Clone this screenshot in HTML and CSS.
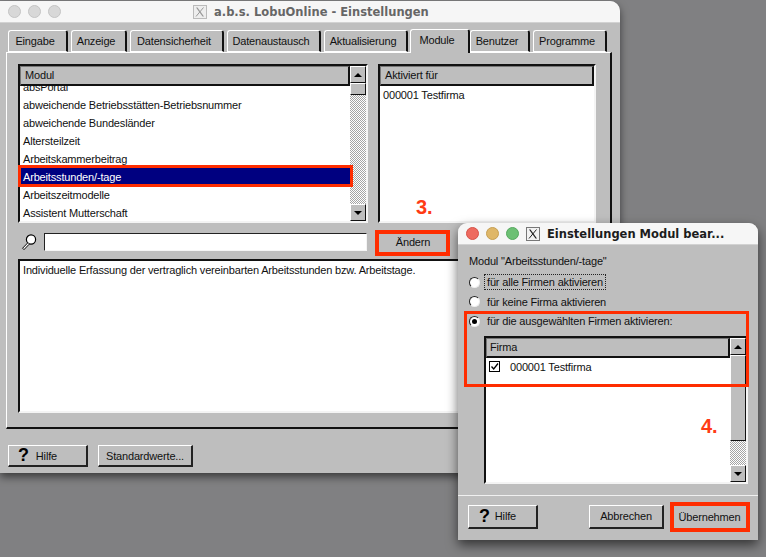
FILE: index.html
```html
<!DOCTYPE html>
<html lang="de">
<head>
<meta charset="utf-8">
<title>a.b.s. LobuOnline - Einstellungen</title>
<link rel="stylesheet" href="styles.css">
</head>
<body>
<section class="window main-window">
  <header class="titlebar">
    <div class="lights"><i class="light"></i><i class="light"></i><i class="light"></i></div>
    <div class="title title-main">
      <svg class="xicon" viewBox="0 0 14 14"><rect x="0.5" y="0.5" width="13" height="13" fill="#eee" stroke="#bbb"/><path d="M3 2.5h1.5L11 11.5H9.5z" fill="#999"/><path d="M10.5 2.5L3 11.5" stroke="#999" fill="none"/></svg>
      <span>a.b.s. LobuOnline - Einstellungen</span>
    </div>
  </header>
  <div class="main-body">
    <nav class="tabs">
      <span class="tab t1">Eingabe</span>
      <span class="tab t2">Anzeige</span>
      <span class="tab t3">Datensicherheit</span>
      <span class="tab t4">Datenaustausch</span>
      <span class="tab t5">Aktualisierung</span>
      <span class="tab t6 active">Module</span>
      <span class="tab t7">Benutzer</span>
      <span class="tab t8">Programme</span>
    </nav>
    <div class="panel">
      <div class="lists">
        <div class="listbox modules">
          <div class="list-main">
            <div class="col-head">Modul</div>
            <div class="rows">
              <div class="row first">absPortal</div>
              <div class="row">abweichende Betriebsstätten-Betriebsnummer</div>
              <div class="row">abweichende Bundesländer</div>
              <div class="row">Altersteilzeit</div>
              <div class="row">Arbeitskammerbeitrag</div>
              <div class="row selected">Arbeitsstunden/-tage</div>
              <div class="row">Arbeitszeitmodelle</div>
              <div class="row">Assistent Mutterschaft</div>
            </div>
          </div>
          <div class="scrollbar">
            <span class="sbtn"><i class="arrow up"></i></span>
            <span class="thumb small"></span>
            <span class="track"></span>
            <span class="sbtn"><i class="arrow down"></i></span>
          </div>
        </div>
        <div class="listbox active-for">
          <div class="list-main">
            <div class="col-head">Aktiviert für</div>
            <div class="rows"><div class="row plain">000001 Testfirma</div></div>
          </div>
        </div>
      </div>
      <div class="search-row">
        <svg class="lens" viewBox="0 0 16 18"><circle cx="10" cy="6.5" r="4.6" fill="#fff" stroke="#000" stroke-width="1.2"/><path d="M6.8 9.8L1.6 15.2L3 16.6L8.2 11.2" stroke="#000" stroke-width="1" fill="#fff"/></svg>
        <div class="input"></div>
        <button class="btn change">Ändern</button>
      </div>
      <div class="description">Individuelle Erfassung der vertraglich vereinbarten Arbeitsstunden bzw. Arbeitstage.</div>
    </div>
    <div class="footer main-footer">
      <button class="btn help"><b class="q">?</b><span>Hilfe</span></button>
      <button class="btn defaults">Standardwerte...</button>
    </div>
  </div>
</section>

<section class="window dialog">
  <header class="titlebar">
    <div class="lights"><i class="light red"></i><i class="light yellow"></i><i class="light green"></i></div>
    <div class="title title-dialog">
      <svg class="xicon dark" viewBox="0 0 14 14"><rect x="0.5" y="0.5" width="13" height="13" fill="#f2f2f2" stroke="#777"/><path d="M3 2.5h1.5L11 11.5H9.5z" fill="#222"/><path d="M10.5 2.5L3 11.5" stroke="#222" fill="none"/></svg>
      <span>Einstellungen Modul bear...</span>
    </div>
  </header>
  <div class="dialog-body">
    <p class="caption">Modul "Arbeitsstunden/-tage"</p>
    <div class="radio"><i class="dot"></i><span class="focus">für alle Firmen aktivieren</span></div>
    <div class="radio"><i class="dot"></i><span>für keine Firma aktivieren</span></div>
    <div class="radio"><i class="dot on"></i><span>für die ausgewählten Firmen aktivieren:</span></div>
    <div class="listbox firms">
      <div class="list-main">
        <div class="col-head">Firma</div>
        <div class="firm-row">
          <svg class="check" viewBox="0 0 11 11"><rect x="0.5" y="0.5" width="10" height="10" fill="#fff" stroke="#000"/><path d="M2.5 5.5l2.2 2.4L9 2.5" fill="none" stroke="#000" stroke-width="1.3"/></svg>
          <span>000001 Testfirma</span>
        </div>
      </div>
      <div class="scrollbar">
        <span class="sbtn"><i class="arrow up"></i></span>
        <span class="thumb large"></span>
        <span class="track"></span>
        <span class="sbtn"><i class="arrow down"></i></span>
      </div>
    </div>
  </div>
  <div class="footer dialog-footer">
    <button class="btn help-d"><b class="q">?</b><span>Hilfe</span></button>
    <button class="btn cancel">Abbrechen</button>
    <button class="btn apply">Übernehmen</button>
  </div>
</section>

<div class="mark m-row"></div>
<div class="mark m-change"></div>
<div class="mark m-firms"></div>
<div class="mark m-apply"></div>
<div class="step s3">3.</div>
<div class="step s4">4.</div>
</body>
</html>
```

FILE: styles.css
```css
* { box-sizing: border-box; }
html, body { margin: 0; padding: 0; }
body {
  width: 766px; height: 557px; overflow: hidden; position: relative;
  background: #808082;
  font: 11px "Liberation Sans", Arial, sans-serif;
  letter-spacing: -0.17px;
  color: #111;
}
.window { position: absolute; background: #bebebe; display: flex; flex-direction: column; }
.main-window {
  left: 0; top: 1px; width: 620px; height: 472px;
  border-radius: 0 10px 0 0;
  box-shadow: 0 4px 8px rgba(0,0,0,.55);
}
.dialog {
  left: 458px; top: 223px; width: 300px; height: 317px;
  border-radius: 9px 9px 0 0;
  box-shadow: 0 5px 12px rgba(0,0,0,.6);
}
.titlebar {
  height: 22px; flex: none; display: flex; align-items: center; position: relative;
  background: #f6f6f6; border-bottom: 1px solid #d2d2d2;
  border-radius: inherit;
}
.lights { display: flex; gap: 7px; padding-left: 8px; }
.light { width: 13px; height: 13px; border-radius: 50%; background: #d8d8d8; border: 1px solid #c4c4c4; }
.light.red { background: #ee6a5f; border-color: #d65248; }
.light.yellow { background: #dfb768; border-color: #c69f52; }
.light.green { background: #6cc074; border-color: #55a85e; }
.title {
  flex: 1; display: flex; align-items: center; gap: 7px;
  font: bold 11.5px "DejaVu Sans", sans-serif;
  letter-spacing: 0;
}
.title-main { padding-left: 132px; color: #666; }
.title-dialog { padding-left: 7px; color: #1c1c1c; }
.xicon { width: 14px; height: 14px; flex: none; }

.main-body { flex: 1; display: flex; flex-direction: column; padding: 6px 8px 0 6px; }
.tabs { display: flex; height: 23px; padding-left: 2px; align-items: flex-end; position: relative; z-index: 1; }
.tab {
  height: 22px; line-height: 21px; text-align: center; padding-right: 5px;
  border-top: 1px solid #fff; border-left: 1px solid #fff;
  border-right: 2px solid #111; border-radius: 3px 3px 0 0;
  border-bottom: 1px solid #fff;
}
.tab + .tab { margin-left: 3px; }
.t1 { width: 60px; } .t2 { width: 56px; } .t3 { width: 94px; } .t4 { width: 94px; }
.t5 { width: 84px; } .t6 { width: 60px; margin-left: 2px !important; } .t7 { width: 60px; margin-left: 0 !important; } .t8 { width: 74px; }
.tab.active { height: 24px; border-bottom: 0; line-height: 20px; margin-bottom: -1px; background: #bebebe; }
.panel {
  width: 606px; height: 377px; flex: none;
  border: 1px solid #fff; border-right: 2px solid #111; border-bottom: 2px solid #111;
  padding: 11px 13px 0 11px;
  display: flex; flex-direction: column;
}
.lists { display: flex; gap: 10px; height: 159px; }
.listbox {
  display: flex; background: #fff;
  border: 2px solid #111; border-right-color: #f4f4f4; border-bottom-color: #f4f4f4;
}
.modules { width: 350px; }
.active-for { width: 218px; }
.list-main { flex: 1; min-width: 0; display: flex; flex-direction: column; }
.col-head {
  height: 20px; flex: none; background: #bebebe; line-height: 17px; padding-left: 4px;
  border: 1px solid #fff; border-right: 2px solid #111; border-bottom: 2px solid #111;
  border-top-color: #777; border-left-color: #777;
}
.firms .col-head { padding-left: 3px; }
.rows { flex: 1; overflow: hidden; position: relative; z-index: 0; }
.row { height: 18px; line-height: 18px; padding-left: 3px; white-space: nowrap; }
.row.first { margin-top: -8px; }
.row.plain { margin-top: 0; }
.row.selected { background: #000080; color: #fff; }
.scrollbar { width: 16px; flex: none; display: flex; flex-direction: column; background: #bebebe; }
.sbtn {
  height: 17px; flex: none; display: flex; align-items: center; justify-content: center;
  background: #bebebe; border: 1px solid #fff; border-right-color: #111; border-bottom-color: #111;
}
.arrow { width: 0; height: 0; border-left: 4px solid transparent; border-right: 4px solid transparent; }
.arrow.up { border-bottom: 4px solid #000; }
.arrow.down { border-top: 4px solid #000; }
.thumb { flex: none; background: #bebebe; border: 1px solid #fff; border-right-color: #111; border-bottom-color: #111; }
.thumb.small { height: 12px; }
.thumb.large { height: 86px; }
.track {
  flex: 1;
  background: repeating-conic-gradient(#a4a4a4 0 25%, #fff 0 50%) 0 0 / 2px 2px;
}
.search-row { display: flex; align-items: center; height: 18px; margin-top: 10px; position: relative; }
.lens { width: 16px; height: 18px; margin-left: 3px; flex: none; }
.input {
  width: 323px; height: 18px; margin-left: 7px; background: #fff;
  border: 1px solid #222; border-right-color: #f4f4f4; border-bottom-color: #f4f4f4;
}
.btn {
  font: 11px "Liberation Sans", Arial, sans-serif; letter-spacing: -0.17px; color: #111; padding: 0;
  background: #bebebe; border: 1px solid #fff; border-right: 2px solid #222; border-bottom: 2px solid #222;
  display: flex; align-items: center; justify-content: center;
}
.change { width: 68px; height: 18px; margin-left: 10px; border: 0; padding-left: 4px; }
.description {
  height: 154px; margin-top: 8px; width: 579px; padding: 3px 3px; background: #fff;
  border: 2px solid #111; border-right-color: #f4f4f4; border-bottom-color: #f4f4f4;
}
.footer { display: flex; align-items: center; }
.main-footer { padding: 16px 0 0 2px; gap: 10px; }
.help { width: 80px; height: 22px; gap: 7px; justify-content: flex-start; padding-left: 9px; }
.q { font: bold 18px "Liberation Sans Narrow", "Liberation Sans", sans-serif; color: #000; }
.defaults { width: 95px; height: 22px; }

.dialog-body { flex: 1; padding: 0 10px 0 11px; border-bottom: 1px solid #f0f0f0; }
.caption { margin: 0; height: 18px; line-height: 18px; margin-top: 7px; }
.radio { display: flex; align-items: center; height: 20px; gap: 5px; padding-left: 0; }
.caption + .radio { margin-top: 2px; }
.radio + .radio { margin-top: -0.5px; }
.radio span { padding: 0 2px; line-height: 14px; }
.radio .focus { outline: 1px dotted #222; outline-offset: 0; }
.dot {
  width: 11px; height: 11px; border-radius: 50%; background: #fff; flex: none; position: relative;
  border: 1px solid #222; border-right-color: #eee; border-bottom-color: #eee;
}
.dot.on::after {
  content: ""; position: absolute; left: 2px; top: 2px; width: 5px; height: 5px; border-radius: 50%; background: #000;
}
.firms { width: 264px; height: 148px; margin: 5px 0 0 15px; }
.firm-row { display: flex; align-items: center; gap: 10px; height: 18px; padding-left: 3px; }
.check { width: 11px; height: 11px; flex: none; margin-top: -1px; }
.dialog-footer { height: 44px; flex: none; padding: 0 15px 3px 10px; }
.help-d { width: 70px; height: 24px; gap: 5px; justify-content: flex-start; padding-left: 10px; }
.cancel { width: 75px; height: 24px; margin-left: auto; }
.apply { width: 72px; height: 24px; margin-left: 7px; border: 0; padding-left: 5px; }

.mark { position: absolute; border: 3px solid #ff2d00; }
.m-row { left: 18px; top: 165px; width: 335px; height: 22px; }
.m-change { left: 375px; top: 230px; width: 75px; height: 26px; border-width: 4px; }
.m-firms { left: 464px; top: 311px; width: 285px; height: 76px; }
.m-apply { left: 670px; top: 502px; width: 80px; height: 30px; border-width: 4px; }
.step { position: absolute; color: #ff3b14; font: bold 20px "Liberation Sans", sans-serif; letter-spacing: 0; }
.s3 { left: 416px; top: 196px; }
.s4 { left: 701px; top: 415px; }
```
